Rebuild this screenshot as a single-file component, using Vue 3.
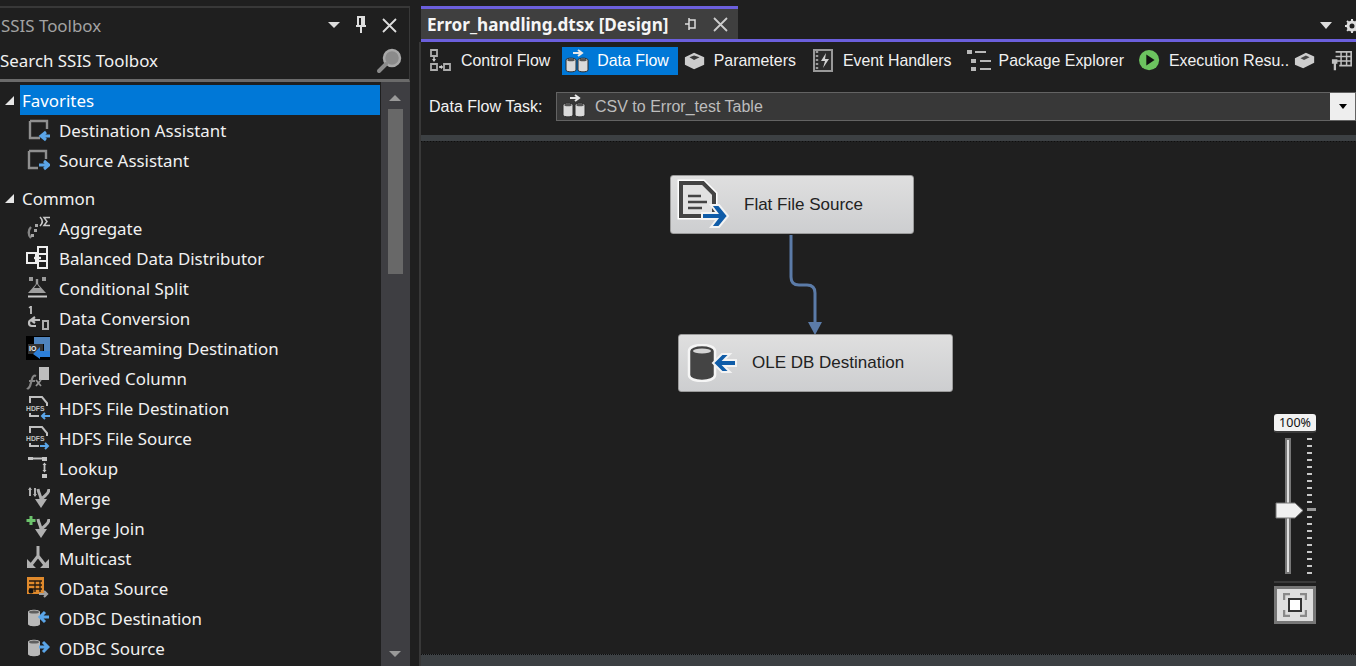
<script setup>
const gray = '#a9a9a9'
const blue = '#5aa5e8'

const icons = {
  dest: `<path d="M4 3h17v8M4 3v17h10" fill="none" stroke="#8f8f8f" stroke-width="2.400"/><path d="M24 18h-8M20 14l-5 4 5 4" fill="none" stroke="${blue}" stroke-width="3"/>`,
  source: `<path d="M3 3h17v8M3 3v17h9" fill="none" stroke="#8f8f8f" stroke-width="2.400"/><path d="M13 17h8M18 13l5 4-5 4" fill="none" stroke="${blue}" stroke-width="3"/>`,
  aggregate: `<path d="M14 1c3 3 3 6 0 9" fill="none" stroke="#c8c8c8" stroke-width="1.600"/><path d="M24 1.500h-6l3 4-3 4h6" fill="none" stroke="#c8c8c8" stroke-width="1.500"/><path d="M5 11c-3 3-3 8 0 11" fill="none" stroke="#858585" stroke-width="2.400"/><path d="M9 8h3v3H9zM8 13h3v3H8zM5 18h3v3H5z" fill="#a5a5a5"/>`,
  balanced: `<path d="M1 7h9v10H1zM12 1h9v7h-9zM12 8h9v7h-9zM12 15h9v7h-9z" fill="#1f1f1f" stroke="#eee" stroke-width="2"/><path d="M8 12h7" stroke="#eee" stroke-width="2.400"/>`,
  split: `<path d="M3 1h4v4H3zM16 1h4v4h-4z" fill="#9a9a9a"/><path d="M11 3v6" stroke="#9a9a9a" stroke-width="2.400"/><path d="M11 7l9 10H2z" fill="#9f9f9f"/><path d="M8 12l3-4 3 4z" fill="#1f1f1f"/><path d="M2 20.500h19" stroke="#c8c8c8" stroke-width="2"/>`,
  convert: `<path d="M5 0v8" stroke="#c0c0c0" stroke-width="1.800"/><path d="M3 2l2-2" stroke="#c0c0c0" stroke-width="1.200"/><path d="M14 14H6c-4 0-4 6 0 6h4M9 11l-4 3 4 3" fill="none" stroke="#c0c0c0" stroke-width="2.200"/><path d="M17 15h5v8h-5z" fill="none" stroke="#adadad" stroke-width="2"/>`,
  stream: `<path d="M0 0h24v24H0z" fill="#000"/><path d="M8 1h16v7H8z" fill="#4f84bd"/><path d="M2 8h15v10H2z" fill="#333"/><path d="M18 6h6v14h-6z" fill="#4f84bd"/><path d="M7 18l7-7v4h10v6H14v2z" fill="#2d7fd8"/><text x="3" y="15" font-size="7" font-weight="700" fill="#eee" font-family="Liberation Sans">IO</text>`,
  derived: `<path d="M13 1h10v13H13z" fill="#bdbdbd"/><path d="M10 10c-2-1-3 0-4 3l-2 7c-1 2-2 3-3 2M3 15h6" fill="none" stroke="#858585" stroke-width="2.200"/><path d="M10 14l5 6M15 14l-5 6" stroke="#949494" stroke-width="1.800"/>`,
  hdfsDest: `<path d="M4 7V1h12l5 6v3M4 17v3h9" fill="none" stroke="#c0c0c0" stroke-width="2"/><text x="0" y="15" font-size="6.800" font-weight="700" fill="#c0c0c0" font-family="Liberation Sans">HDFS</text><path d="M24 20h-8M19 17l-3 3 3 3" fill="none" stroke="${blue}" stroke-width="2"/>`,
  hdfsSource: `<path d="M4 7V1h12l5 6v3M4 17v3h9" fill="none" stroke="#c0c0c0" stroke-width="2"/><text x="0" y="15" font-size="6.800" font-weight="700" fill="#c0c0c0" font-family="Liberation Sans">HDFS</text><path d="M14 20h8M19 17l3 3-3 3" fill="none" stroke="${blue}" stroke-width="2"/>`,
  lookup: `<path d="M2 1h5v3H2zM16 1h5v4h-5zM16 18h5v4h-5z" fill="#c4c4c4"/><path d="M6 2.500h10M18.500 8v7" stroke="#c4c4c4" stroke-width="1.800"/><path d="M16.500 9l2-2.500 2 2.500zM16.500 14l2 2.500 2-2.500z" fill="#c4c4c4"/>`,
  merge: `<path d="M4 2v8M9 2v8" stroke="#b0b0b0" stroke-width="2"/><path d="M2 4l2-3 2 3M7 8l2 3 2-3" fill="#b0b0b0"/><path d="M12 3c1 6 3 6 3 11M23 3c0 6-5 6-8 11" fill="none" stroke="#b0b0b0" stroke-width="3"/><path d="M9 13h12l-6 9z" fill="#b0b0b0"/>`,
  join: `<path d="M5 0v9M0.500 4.500h9" stroke="#6cc36c" stroke-width="3"/><path d="M12 3c1 6 3 6 3 11M23 3c0 6-5 6-8 11" fill="none" stroke="#b0b0b0" stroke-width="3"/><path d="M9 13h12l-6 9z" fill="#b0b0b0"/>`,
  multicast: `<path d="M12 0v11M12 10l-7 9M12 10l7 9" fill="none" stroke="#b0b0b0" stroke-width="3"/><path d="M1 13v9h9zM23 13v9h-9z" fill="#b0b0b0"/>`,
  odata: `<path d="M1 1h17v17H1z" fill="#e08a2c"/><path d="M3 5h13M3 9h13M3 13h13M9 5v11M14 5v11" stroke="#231a10" stroke-width="1.300"/><circle cx="5" cy="15" r="2.500" fill="#111"/><path d="M13 18h8M18 15l3 3-3 3" fill="none" stroke="#a0a0a0" stroke-width="2.200"/>`,
  odbcDest: `<path d="M2 6c0-3 12-3 12 0v12c0 3-12 3-12 0z" fill="#b8b8b8"/><ellipse cx="8" cy="6" rx="5" ry="1.600" fill="#5f5f5f"/><path d="M23 11h-8M19 6l-5 5 5 5" fill="none" stroke="${blue}" stroke-width="3"/>`,
  odbcSource: `<path d="M2 6c0-3 12-3 12 0v12c0 3-12 3-12 0z" fill="#b8b8b8"/><ellipse cx="8" cy="6" rx="5" ry="1.600" fill="#5f5f5f"/><path d="M13 11h8M17 6l5 5-5 5" fill="none" stroke="${blue}" stroke-width="3"/>`,
  control: `<path d="M2 1h6v6H2zM2 15h6v6H2zM15 15h6v6h-6z" fill="none" stroke="#adadad" stroke-width="1.800"/><path d="M5 8v3M10 18h4" stroke="#ccc" stroke-width="1.500"/><path d="M3 10h4l-2 3zM13 16v4l-3-2z" fill="#ccc"/>`,
  dataflow: `<path d="M1 11c0-2.500 10-2.500 10 0v10c0 2.500-10 2.500-10 0zM13 11c0-2.500 10-2.500 10 0v10c0 2.500-10 2.500-10 0z" fill="#dadada" stroke="#2a2a2a"/><ellipse cx="6" cy="11" rx="3.800" ry="1.300" fill="#555"/><ellipse cx="18" cy="11" rx="3.800" ry="1.300" fill="#555"/><path d="M8 4h8M13 1l4 3-4 3" fill="none" stroke="#e8e8e8" stroke-width="2"/>`,
  params: `<path d="M1 8l10-5 11 5v8l-11 5-10-5z" fill="#cdcdcd"/><path d="M6 8l5-2 6 2-6 3z" fill="#383838"/>`,
  events: `<path d="M3 1h18v21H3z" fill="#2b2b2b" stroke="#999" stroke-width="2"/><path d="M6 2v19" stroke="#999" stroke-dasharray="2 2" stroke-width="2.400"/><path d="M15 4l-5 8h4l-2 7 6-9h-4z" fill="#d2d2d2"/>`,
  explorer: `<path d="M0 1h5v4H0zM4 10h5v4H4zM4 18h5v4H4z" fill="#b8b8b8"/><path d="M8 3h11M13 12h11M13 20h11" stroke="#b8b8b8" stroke-width="2"/>`,
  run: `<circle cx="11" cy="11" r="11" fill="#6cc35f"/><path d="M8 5l9 6-9 6z" fill="#111"/>`,
  box: `<path d="M1 9l12-6 9 4v7l-12 6-9-4z" fill="#cdcdcd"/><path d="M7 9l6-3 4 2-6 3z" fill="#484848"/>`,
  table: `<path d="M5 2h17v15H9" fill="none" stroke="#c0c0c0" stroke-width="1.800"/><path d="M5 7h17M5 12h17M11 2v15M17 2v15" stroke="#c0c0c0" stroke-width="1.600"/><path d="M1 10h6v5H1zM3 15h2.500v7H3z" fill="#c0c0c0"/>`,
}

const favorites = [
  { name: 'Destination Assistant', icon: 'dest' },
  { name: 'Source Assistant', icon: 'source' },
]

const common = [
  { name: 'Aggregate', icon: 'aggregate' },
  { name: 'Balanced Data Distributor', icon: 'balanced' },
  { name: 'Conditional Split', icon: 'split' },
  { name: 'Data Conversion', icon: 'convert' },
  { name: 'Data Streaming Destination', icon: 'stream' },
  { name: 'Derived Column', icon: 'derived' },
  { name: 'HDFS File Destination', icon: 'hdfsDest' },
  { name: 'HDFS File Source', icon: 'hdfsSource' },
  { name: 'Lookup', icon: 'lookup' },
  { name: 'Merge', icon: 'merge' },
  { name: 'Merge Join', icon: 'join' },
  { name: 'Multicast', icon: 'multicast' },
  { name: 'OData Source', icon: 'odata' },
  { name: 'ODBC Destination', icon: 'odbcDest' },
  { name: 'ODBC Source', icon: 'odbcSource' },
]

const tabs = [
  { name: 'Control Flow', icon: 'control' },
  { name: 'Data Flow', icon: 'dataflow', active: true },
  { name: 'Parameters', icon: 'params', narrow: true },
  { name: 'Event Handlers', icon: 'events' },
  { name: 'Package Explorer', icon: 'explorer' },
  { name: 'Execution Resu..', icon: 'run', narrow: true },
]

const ticks = Array.from({ length: 20 }, (_, i) => i)
</script>

<template>
  <div class="app">
    <aside class="toolbox">
      <div class="pane-title">
        <span class="pane-name">SSIS Toolbox</span>
        <span class="pane-tools">
          <svg width="12" height="8" viewBox="0 0 12 8"><path d="M0 1h12L6 7z" fill="#ddd" /></svg>
          <svg width="12" height="18" viewBox="0 0 12 18"><path d="M3 1h6v9H3zM1 10h10M6 10v7M7 2v8" fill="none" stroke="#ddd" stroke-width="2" /></svg>
          <svg width="15" height="15" viewBox="0 0 15 15"><path d="M1 1l13 13M14 1L1 14" stroke="#ddd" stroke-width="1.800" /></svg>
        </span>
      </div>
      <div class="search">
        <span>Search SSIS Toolbox</span>
        <svg width="26" height="26" viewBox="0 0 26 26">
          <circle cx="16" cy="10" r="8" fill="#8b8b8b" stroke="#a8a8a8" stroke-width="2.500" />
          <path d="M10 16l-7 7" stroke="#8a8a8a" stroke-width="4" stroke-linecap="round" />
        </svg>
      </div>
      <div class="tree-wrap">
        <div class="tree">
          <div class="group selected">
            <svg class="caret" width="9" height="9" viewBox="0 0 9 9"><path d="M9 0v9H0z" fill="#e6e6e6" /></svg>
            <span class="group-name">Favorites</span>
          </div>
          <div v-for="item in favorites" :key="item.name" class="item">
            <svg class="item-icon" viewBox="0 0 24 24" v-html="icons[item.icon]"></svg>
            <span>{{ item.name }}</span>
          </div>
          <div class="group second">
            <svg class="caret" width="9" height="9" viewBox="0 0 9 9"><path d="M9 0v9H0z" fill="#e6e6e6" /></svg>
            <span class="group-name">Common</span>
          </div>
          <div v-for="item in common" :key="item.name" class="item">
            <svg class="item-icon" viewBox="0 0 24 24" v-html="icons[item.icon]"></svg>
            <span>{{ item.name }}</span>
          </div>
        </div>
        <div class="scrollbar">
          <svg width="14" height="7" viewBox="0 0 14 7"><path d="M1 7h12L7 1z" fill="#999" /></svg>
          <div class="thumb"></div>
          <svg class="scroll-down" width="14" height="7" viewBox="0 0 14 7"><path d="M1 0h12L7 6z" fill="#999" /></svg>
        </div>
      </div>
    </aside>

    <main class="designer">
      <div class="tabstrip">
        <div class="doc-tab">
          <span class="doc-name">Error_handling.dtsx [Design]</span>
          <svg width="14" height="12" viewBox="0 0 14 12"><path d="M5 2h6v8H5zM1 6h4M5 0v12" fill="none" stroke="#ddd" stroke-width="1.500" /></svg>
          <svg width="15" height="15" viewBox="0 0 15 15"><path d="M1 1l13 13M14 1L1 14" stroke="#ccc" stroke-width="1.800" /></svg>
        </div>
        <div class="strip-tools">
          <svg width="12" height="7" viewBox="0 0 12 7"><path d="M0 0h12L6 7z" fill="#ddd" /></svg>
          <svg class="gear" width="14" height="14" viewBox="0 0 14 14">
            <circle cx="7" cy="7" r="4" fill="none" stroke="#ddd" stroke-width="3" />
            <path d="M7 0v14M0 7h14M2 2l10 10M12 2L2 12" stroke="#ddd" stroke-width="2" stroke-dasharray="2 10" />
          </svg>
        </div>
      </div>

      <div class="content">
        <nav class="toolbar">
          <div v-for="tab in tabs" :key="tab.name" class="tab" :class="{ active: tab.active, narrow: tab.narrow }">
            <svg class="tab-icon" viewBox="0 0 24 24" v-html="icons[tab.icon]"></svg>
            <span>{{ tab.name }}</span>
          </div>
          <svg class="extra-box" width="22" height="22" viewBox="0 0 24 24" v-html="icons.box"></svg>
          <svg class="extra-table" width="22" height="22" viewBox="0 0 24 24" v-html="icons.table"></svg>
        </nav>

        <div class="task-row">
          <label>Data Flow Task:</label>
          <div class="task-select">
            <svg width="24" height="24" viewBox="0 0 24 24" v-html="icons.dataflow"></svg>
            <span class="task-name">CSV to Error_test Table</span>
            <span class="task-arrow">
              <svg width="8" height="5" viewBox="0 0 8 5"><path d="M0 0h8L4 5z" fill="#000" /></svg>
            </span>
          </div>
        </div>

        <div class="canvas">
          <div class="node node-source">
            <svg width="54" height="52" viewBox="0 0 54 52">
              <path d="M5 4h22l11 11v22H5z" fill="#f4f4f4" stroke="#fff" stroke-width="7" />
              <path d="M5 4h22l11 11v22H5z" fill="#e2e2e2" stroke="#444" stroke-width="4" />
              <path d="M12 17h13M12 23h19M12 29h14" stroke="#444" stroke-width="2.500" />
              <path d="M26 34h15l-6-8h8l9 11-9 11h-8l6-8H26z" fill="#0f5ca8" stroke="#f3f3f3" stroke-width="2" />
            </svg>
            <span>Flat File Source</span>
          </div>

          <svg class="connector" width="40" height="102" viewBox="0 0 40 102">
            <path d="M8 0v42q0 8 8 8h8q8 0 8 8v32" fill="none" stroke="#5b7ba8" stroke-width="3" />
            <path d="M25 87h14l-7 13z" fill="#5b7ba8" />
          </svg>

          <div class="node node-dest">
            <svg width="52" height="38" viewBox="0 0 52 38">
              <path d="M3 7c0-8 26-8 26 0v24c0 8-26 8-26 0z" fill="#444" stroke="#f5f5f5" stroke-width="2.500" />
              <ellipse cx="16" cy="7" rx="9" ry="2.500" fill="#d5d5d5" />
              <path d="M50 16H38l6-6h-8l-9 9 9 9h8l-6-6h12z" fill="#0f5ca8" stroke="#f3f3f3" stroke-width="2" />
            </svg>
            <span>OLE DB Destination</span>
          </div>

          <div class="zoom">
            <div class="zoom-label">100%</div>
            <div class="zoom-slider">
              <div class="track"></div>
              <div class="ticks">
                <i v-for="t in ticks" :key="t" :class="{ mid: t === 10 }"></i>
              </div>
              <svg class="slider-thumb" width="29" height="17" viewBox="0 0 29 17">
                <path d="M1 1h19l8 7.500-8 7.500H1z" fill="#f0f0f0" stroke="#777" />
              </svg>
            </div>
            <div class="zoom-sep"></div>
            <div class="zoom-fit">
              <svg width="24" height="24" viewBox="0 0 24 24">
                <path d="M1 7V1h6M17 1h6v6M23 17v6h-6M7 23H1v-6" fill="none" stroke="#8a8a8a" stroke-width="2.500" />
                <path d="M6 6h12v12H6z" fill="#fff" stroke="#333" stroke-width="2" />
              </svg>
            </div>
          </div>
        </div>
        <div class="bottom-band"></div>
      </div>
    </main>
  </div>
</template>

<style>
html, body {
  margin: 0;
  background: #1f1f1f;
  overflow: hidden;
}
</style>

<style scoped>
.app {
  display: flex;
  width: 1356px;
  height: 666px;
  overflow: hidden;
  background: #1f1f1f;
  color: #f1f1f1;
}

/* toolbox */
.toolbox {
  width: 410px;
  flex: none;
  margin-top: 6px;
  border-top: 2px solid #383838;
  box-sizing: border-box;
  display: flex;
  flex-direction: column;
  font-family: "Noto Sans", "Open Sans", sans-serif;
  font-size: 16.900px;
}
.pane-title {
  height: 34px;
  display: flex;
  align-items: center;
  justify-content: space-between;
  padding-right: 12px;
  border-right: 1px solid #383838;
}
.pane-name {
  color: #a3a3a3;
  padding-left: 1px;
}
.pane-tools {
  display: flex;
  align-items: center;
  gap: 15px;
}
.search {
  height: 37px;
  display: flex;
  align-items: center;
  justify-content: space-between;
  padding-right: 7px;
  border-bottom: 3px solid #6a6a6a;
  border-right: 1px solid #383838;
  color: #f1f1f1;
}
.tree-wrap {
  flex: 1;
  display: flex;
  min-height: 0;
  padding-top: 3px;
}
.tree {
  width: 381px;
  flex: none;
}
.group {
  height: 30px;
  display: flex;
  align-items: center;
  position: relative;
}
.group.second {
  margin-top: 8px;
}
.caret {
  margin-left: 5px;
  margin-right: 6px;
  flex: none;
}
.group-name {
  display: flex;
  align-items: center;
  height: 30px;
  flex: 1;
  padding-left: 2px;
  margin-right: 1px;
}
.selected .group-name {
  background: #0078d7;
  color: #fff;
}
.item {
  height: 30px;
  display: flex;
  align-items: center;
  padding-left: 26px;
  gap: 9px;
}
.item-icon {
  width: 24px;
  height: 24px;
  flex: none;
}
.scrollbar {
  flex: 1;
  margin-top: -3px;
  background: #3e3e42;
  display: flex;
  flex-direction: column;
  align-items: center;
  padding: 12px 1px 0 0;
  box-sizing: border-box;
}
.thumb {
  width: 15px;
  height: 165px;
  margin-top: 8px;
  background: #686868;
}
.scroll-down {
  margin-top: auto;
  margin-bottom: 8px;
}

/* designer */
.designer {
  flex: 1;
  min-width: 0;
  display: flex;
  flex-direction: column;
  padding-left: 10px;
}
.tabstrip {
  height: 39px;
  padding-top: 6px;
  box-sizing: border-box;
  display: flex;
  justify-content: space-between;
  margin-left: 1px;
}
.doc-tab {
  width: 317px;
  box-sizing: border-box;
  border-top: 3px solid #6b5fdc;
  background: #3f3f3f;
  display: flex;
  align-items: center;
  padding-left: 6px;
  font-family: "Noto Sans", sans-serif;
  font-size: 17.150px;
  font-weight: 700;
  color: #f5f5f5;
}
.doc-name {
  width: 257px;
  flex: none;
  white-space: nowrap;
}
.doc-tab svg:last-child {
  margin-left: 15px;
}
.strip-tools {
  display: flex;
  align-items: center;
  gap: 13px;
  padding-top: 6px;
  margin-right: -3px;
}
.content {
  flex: 1;
  min-height: 0;
  display: flex;
  flex-direction: column;
  border-top: 3px solid #6b5fdc;
  margin-left: 1px;
  position: relative;
}
.content::before {
  content: "";
  position: absolute;
  left: -2px;
  top: 0;
  bottom: 0;
  width: 2px;
  background: #383838;
}
.toolbar {
  height: 28px;
  margin-top: 5px;
  padding-left: 5px;
  display: flex;
  gap: 3px;
  font-family: "Liberation Sans", Arial, sans-serif;
  font-size: 15.900px;
  white-space: nowrap;
}
.tab {
  display: flex;
  align-items: center;
  gap: 8px;
  padding: 0 9px 0 3px;
}
.tab.active {
  background: #0078d7;
  color: #fff;
}
.tab-icon {
  width: 24px;
  height: 24px;
  flex: none;
}
.tab.narrow .tab-icon {
  width: 22px;
  height: 22px;
}
.extra-box {
  flex: none;
  margin-left: -7px;
  align-self: center;
}
.extra-table {
  flex: none;
  margin-left: 12px;
  align-self: center;
}
.task-row {
  display: flex;
  align-items: center;
  height: 30px;
  margin-top: 16px;
  padding-left: 8px;
  font-family: "Liberation Sans", Arial, sans-serif;
  font-size: 16px;
}
.task-row label {
  width: 127px;
  flex: none;
  padding-top: 1px;
}
.task-select {
  flex: 1;
  height: 29px;
  box-sizing: border-box;
  border: 1px solid #636363;
  background: #383838;
  display: flex;
  align-items: center;
  gap: 9px;
  padding-left: 5px;
  color: #bdbdbd;
}
.task-name {
  flex: 1;
  padding-top: 1px;
}
.task-arrow {
  width: 25px;
  height: 27px;
  background: #eee;
  display: flex;
  align-items: center;
  justify-content: center;
}
.canvas {
  flex: 1;
  min-height: 0;
  margin-top: 14px;
  border-top: 6px solid #3c4043;
  position: relative;
  background: #1f1f1f;
  background-image: linear-gradient(90deg, #0d0d0d 50%, transparent 50%);
  background-size: 3px 1px;
  background-repeat: repeat-x;
}
.bottom-band {
  height: 12px;
  flex: none;
  background: #3c4043;
  border-top: 1px dotted #0d0d0d;
  box-sizing: border-box;
}
.node {
  position: absolute;
  height: 58px;
  box-sizing: border-box;
  border-radius: 3px;
  background: linear-gradient(#dfdfdf, #cdced0);
  border: 1px solid #9a9a9a;
  display: flex;
  align-items: center;
  color: #222;
  font-family: "Liberation Sans", Arial, sans-serif;
  font-size: 17px;
}
.node-source {
  left: 249px;
  top: 34px;
  width: 244px;
  height: 59px;
  padding-left: 5px;
  gap: 14px;
}
.node-dest {
  left: 257px;
  top: 193px;
  width: 275px;
  padding-left: 7px;
  gap: 14px;
}
.connector {
  position: absolute;
  left: 362px;
  top: 94px;
}
.zoom {
  position: absolute;
  left: 853px;
  top: 273px;
  width: 42px;
  display: flex;
  flex-direction: column;
}
.zoom-label {
  height: 17px;
  border-radius: 3px;
  background: #f2f2f2;
  color: #111;
  border-bottom: 2px solid #3a3a3a;
  font-family: "Noto Sans", sans-serif;
  font-size: 12.500px;
  line-height: 17px;
  text-align: center;
}
.zoom-slider {
  position: relative;
  height: 136px;
  margin-top: 5px;
}
.track {
  position: absolute;
  left: 11px;
  top: 0;
  bottom: 0;
  width: 2px;
  border: 2px solid #777;
  background: #ddd;
}
.ticks {
  position: absolute;
  left: 33px;
  top: 0;
  bottom: 0;
  display: flex;
  flex-direction: column;
  justify-content: space-between;
}
.ticks i {
  display: block;
  width: 5px;
  height: 2px;
  background: #c8c8c8;
}
.ticks i.mid {
  width: 9px;
  height: 3px;
  background: #999;
}
.slider-thumb {
  position: absolute;
  left: 1px;
  top: 64px;
}
.zoom-sep {
  height: 2px;
  margin-top: 7px;
  background: #3a3a3a;
}
.zoom-fit {
  height: 38px;
  margin-top: 3px;
  box-sizing: border-box;
  border: 3px solid #777;
  background: #dedede;
  display: flex;
  align-items: center;
  justify-content: center;
}
</style>
